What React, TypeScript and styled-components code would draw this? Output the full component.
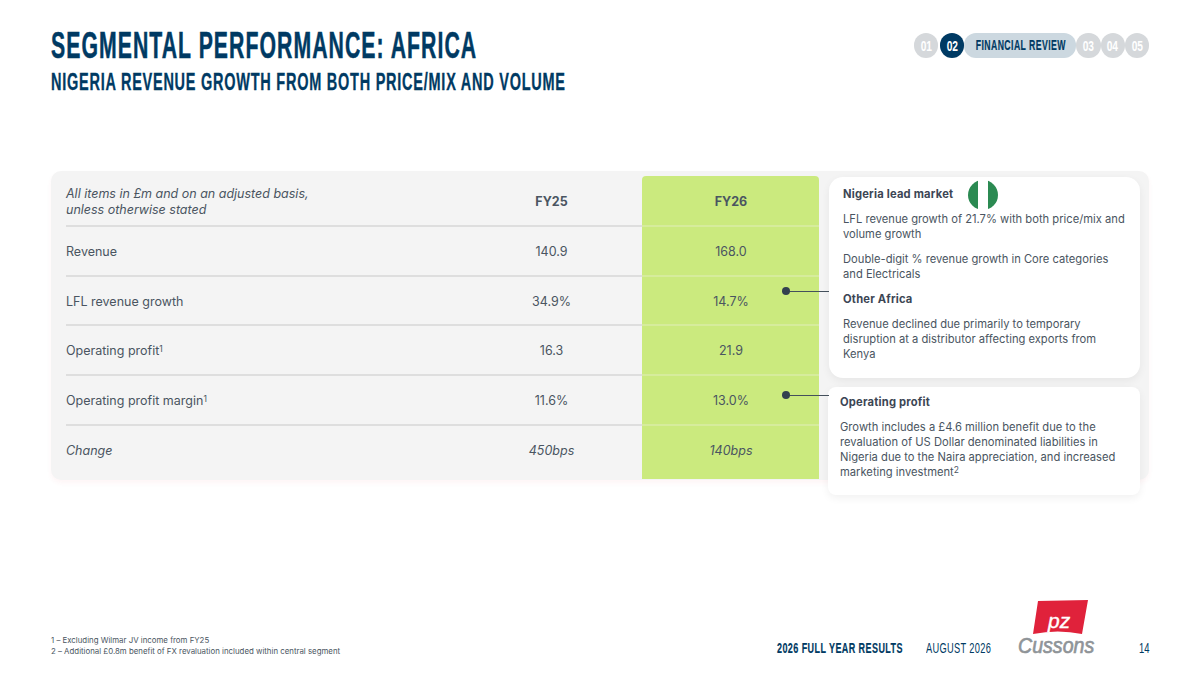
import React from "react";
import styled, { createGlobalStyle } from "styled-components";

const Global = createGlobalStyle`
  html, body { margin: 0; padding: 0; background: #fff; }
  body { font-family: "Inter", "Noto Sans", sans-serif; color: #4a5561; }
`;

const navy = "#003a63";
const condensed = `"Liberation Sans", sans-serif`;

const Slide = styled.div`
  width: 1200px;
  height: 675px;
  box-sizing: border-box;
  padding: 26px 51px 18px;
  display: flex;
  flex-direction: column;
  overflow: hidden;
`;

const Header = styled.header`
  display: flex;
  justify-content: space-between;
  align-items: flex-start;
  height: 145px;
`;

// no condensed face is installed, so the display type is squeezed horizontally
const Squeeze = styled.span<{ $x: number; $origin?: string; $track?: number }>`
  display: inline-block;
  white-space: nowrap;
  letter-spacing: ${(p) => p.$track || 0}px;
  transform: scaleX(${(p) => p.$x});
  transform-origin: ${(p) => p.$origin || "left"} center;
`;

const Title = styled.h1`
  margin: 0;
  width: 430px;
  font: 700 36px/40px ${condensed};
  color: ${navy};
  -webkit-text-stroke: 0.5px ${navy};
`;

const Subtitle = styled.h2`
  margin: 2px 0 0;
  width: 520px;
  font: 700 23px/28px ${condensed};
  color: ${navy};
  -webkit-text-stroke: 0.3px ${navy};
`;

const Nav = styled.nav`
  display: flex;
  margin-top: 7px;
`;

const NavDot = styled.span<{ $active?: boolean }>`
  width: 24.2px;
  height: 24.5px;
  border-radius: 50%;
  margin-left: ${(p) => (p.$active ? "2px" : "0")};
  display: flex;
  align-items: center;
  justify-content: center;
  background: ${(p) => (p.$active ? navy : "#d5d8db")};
  color: #fff;
  font: 700 15px ${condensed};
`;

const NavPill = styled.span`
  width: 112px;
  height: 24.5px;
  border-radius: 12px;
  display: flex;
  align-items: center;
  justify-content: center;
  background: #ccd8e0;
  color: ${navy};
  font: 700 14px ${condensed};
  -webkit-text-stroke: 0.2px ${navy};
`;

const Panel = styled.section`
  position: relative;
  height: 309px;
  border-radius: 10px;
  background: #f4f4f4;
  box-shadow: 0 3px 5px rgba(230, 60, 80, 0.05);
  padding: 5px 9px 1px 15px;
  display: flex;
  box-sizing: border-box;
  gap: 10px;
`;

const Table = styled.div`
  width: 753px;
  flex-shrink: 0;
  display: grid;
  grid-template-columns: 395px 181px 177px;
  grid-template-rows: 51px 50px 49px 50px 50px 53px;
`;

const Cell = styled.div<{ $col?: "label" | "num" | "hl"; $head?: boolean; $italic?: boolean; $last?: boolean }>`
  display: flex;
  align-items: center;
  justify-content: ${(p) => (p.$col === "label" ? "flex-start" : "center")};
  box-sizing: border-box;
  font-size: 12.5px;
  line-height: 16px;
  font-weight: ${(p) => (p.$head && p.$col !== "label" ? 700 : 400)};
  font-style: ${(p) => (p.$italic ? "italic" : "normal")};
  border-bottom: ${(p) => (p.$last ? "none" : "2px solid #dedede")};
  padding-top: 2px;
  padding-bottom: ${(p) => (p.$last ? "5px" : "0")};
  padding-left: ${(p) => (p.$col === "hl" ? "1px" : "0")};
  background: ${(p) => (p.$col === "hl" ? "#cbea7e" : "transparent")};
  border-radius: ${(p) => (p.$col === "hl" && p.$head ? "4px 4px 0 0" : "0")};
  ${(p) => (p.$col === "hl" ? "border-bottom-color: #d6ec9c;" : "")}
`;

const Sup = styled.sup`
  font-size: 8.5px;
  line-height: 0;
  vertical-align: baseline;
  position: relative;
  top: -3.5px;
`;

const Notes = styled.div`
  flex: 1;
  display: flex;
  flex-direction: column;
  gap: 9px;
  padding-top: 1px;
`;

const Card = styled.div<{ $tight?: boolean }>`
  box-sizing: border-box;
  flex-shrink: 0;
  background: #fff;
  border-radius: ${(p) => (p.$tight ? "8px" : "14px")};
  box-shadow: 0 3px 8px rgba(0, 0, 0, 0.06);
  height: ${(p) => (p.$tight ? "108px" : "201px")};
  padding: ${(p) => (p.$tight ? "8px 14px 0 12px" : "10px 10px 0 14px")};
  margin-left: ${(p) => (p.$tight ? "-1px" : "0")};
  font-size: 11.2px;
  line-height: 15px;
`;

const NoteHead = styled.div`
  display: flex;
  align-items: center;
  gap: 15px;
  font-weight: 700;
  letter-spacing: 0.2px;
  color: #3c4654;
  height: 15px;
  margin-bottom: 10px;
`;

const NoteText = styled.p`
  margin: 0 0 10px;
`;

const Connector = styled.div<{ $top: number }>`
  position: absolute;
  left: 731px;
  top: ${(p) => p.$top}px;
  width: 47px;
  height: 1px;
  background: #44505c;
  &::before {
    content: "";
    position: absolute;
    left: 0;
    top: -4px;
    width: 8px;
    height: 8px;
    border-radius: 50%;
    background: #33404f;
  }
`;

const Footer = styled.footer`
  margin-top: auto;
  display: flex;
  align-items: flex-end;
  justify-content: space-between;
`;

const Footnotes = styled.div`
  font-size: 7.85px;
  line-height: 11px;
`;

const FootRight = styled.div`
  display: flex;
  align-items: flex-end;
`;

const FootLabel = styled.span<{ $bold?: boolean; $w: number }>`
  width: ${(p) => p.$w}px;
  padding-bottom: 1px;
  font: ${(p) => (p.$bold ? 700 : 400)} 14.5px/16px ${condensed};
  color: ${navy};
  ${(p) => (p.$bold ? `-webkit-text-stroke: 0.2px ${navy};` : "")}
`;

const LogoSvg = styled.svg`
  display: block;
  margin-right: 41px;
`;

const Logo = () => (
  <LogoSvg width="80" height="57" viewBox="0 0 80 57">
    <path d="M20 1 L70 0 L64 34 Q40 29 15 34 Z" fill="#e0223b" />
    <text x="30" y="28" fill="#fff" stroke="#fff" strokeWidth="0.4" fontFamily="Liberation Sans" fontStyle="italic" fontSize="21">pz</text>
    <text x="0" y="47.3" transform="scale(1 1.12)" fill="#8f9498" stroke="#8f9498" strokeWidth="0.6" fontFamily="Liberation Sans" fontStyle="italic" fontSize="19.6">Cussons</text>
  </LogoSvg>
);

const FlagSvg = styled.svg`
  margin: -8px 0;
`;

const Flag = () => (
  <FlagSvg width="30" height="30" viewBox="0 0 30 30">
    <circle cx="15" cy="15" r="15" fill="#2b8a52" />
    <rect x="10" y="0" width="10" height="30" fill="#fff" />
  </FlagSvg>
);

const rows: { label: React.ReactNode; a: string; b: string; italic?: boolean }[] = [
  { label: "Revenue", a: "140.9", b: "168.0" },
  { label: "LFL revenue growth", a: "34.9%", b: "14.7%" },
  { label: <span>Operating profit<Sup>1</Sup></span>, a: "16.3", b: "21.9" },
  { label: <span>Operating profit margin<Sup>1</Sup></span>, a: "11.6%", b: "13.0%" },
  { label: "Change", a: "450bps", b: "140bps", italic: true },
];

export default function App() {
  return (
    <Slide>
      <Global />
      <Header>
        <div>
          <Title><Squeeze $x={0.59} $track={1.76}>SEGMENTAL PERFORMANCE: AFRICA</Squeeze></Title>
          <Subtitle><Squeeze $x={0.63} $track={1.2}>NIGERIA REVENUE GROWTH FROM BOTH PRICE/MIX AND VOLUME</Squeeze></Subtitle>
        </div>
        <Nav>
          <NavDot><Squeeze $x={0.68} $origin="center">01</Squeeze></NavDot>
          <NavDot $active><Squeeze $x={0.68} $origin="center">02</Squeeze></NavDot>
          <NavPill><Squeeze $x={0.62} $origin="center" $track={0.7}>FINANCIAL REVIEW</Squeeze></NavPill>
          <NavDot><Squeeze $x={0.68} $origin="center">03</Squeeze></NavDot>
          <NavDot><Squeeze $x={0.68} $origin="center">04</Squeeze></NavDot>
          <NavDot><Squeeze $x={0.68} $origin="center">05</Squeeze></NavDot>
        </Nav>
      </Header>

      <Panel>
        <Table>
          <Cell $col="label" $head $italic>
            <span>
              All items in £m and on an adjusted basis,
              <br />
              unless otherwise stated
            </span>
          </Cell>
          <Cell $col="num" $head>FY25</Cell>
          <Cell $col="hl" $head>FY26</Cell>
          {rows.map((r, i) => {
            const last = i === rows.length - 1;
            return (
              <React.Fragment key={i}>
                <Cell $col="label" $italic={r.italic} $last={last}>{r.label}</Cell>
                <Cell $col="num" $italic={r.italic} $last={last}>{r.a}</Cell>
                <Cell $col="hl" $italic={r.italic} $last={last}>{r.b}</Cell>
              </React.Fragment>
            );
          })}
        </Table>
        <Notes>
          <Card>
            <NoteHead>Nigeria lead market <Flag /></NoteHead>
            <NoteText>LFL revenue growth of 21.7% with both price/mix and volume growth</NoteText>
            <NoteText>Double-digit % revenue growth in Core categories and Electricals</NoteText>
            <NoteHead>Other Africa</NoteHead>
            <NoteText>Revenue declined due primarily to temporary disruption at a distributor affecting exports from Kenya</NoteText>
          </Card>
          <Card $tight>
            <NoteHead>Operating profit</NoteHead>
            <NoteText>
              Growth includes a £4.6 million benefit due to the revaluation of US Dollar denominated liabilities in
              Nigeria due to the Naira appreciation, and increased marketing investment<Sup>2</Sup>
            </NoteText>
          </Card>
        </Notes>
        <Connector $top={120} />
        <Connector $top={224} />
      </Panel>

      <Footer>
        <Footnotes>
          1 – Excluding Wilmar JV income from FY25
          <br />
          2 – Additional £0.8m benefit of FX revaluation included within central segment
        </Footnotes>
        <FootRight>
          <FootLabel $bold $w={149}><Squeeze $x={0.62} $track={0.7}>2026 FULL YEAR RESULTS</Squeeze></FootLabel>
          <FootLabel $w={92}><Squeeze $x={0.64} $track={0.5}>AUGUST 2026</Squeeze></FootLabel>
          <Logo />
          <FootLabel $w={10}><Squeeze $x={0.65}>14</Squeeze></FootLabel>
        </FootRight>
      </Footer>
    </Slide>
  );
}
